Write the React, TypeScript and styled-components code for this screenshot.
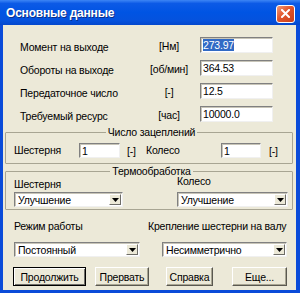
import styled, { createGlobalStyle } from "styled-components";

const GlobalStyle = createGlobalStyle`
  html, body { margin: 0; padding: 0; background: #fff; }
  body {
    font-family: "Liberation Sans", Arial, sans-serif;
    font-size: 10.5px;
    letter-spacing: -0.2px;
    color: #000;
  }
  * { box-sizing: border-box; }
`;

const Window = styled.div`
  width: 300px;
  height: 293px;
  display: flex;
  flex-direction: column;
  background: #0a4bd9;
`;

const TitleBar = styled.div`
  height: 25px;
  flex: none;
  display: flex;
  align-items: center;
  justify-content: space-between;
  padding: 0 5px 0 6px;
  background: linear-gradient(#3d86f5 0%, #0c5ae6 14%, #0054e3 50%, #0552dd 82%, #0447cc 100%);
`;

const Title = styled.span`
  color: #fff;
  font-weight: bold;
  font-size: 12px;
  letter-spacing: -0.2px;
  text-shadow: 1px 1px 0 #0a2f8a;
`;

const CloseButton = styled.div`
  width: 19px;
  height: 18px;
  margin-top: 2px;
  border: 1px solid #fff;
  border-radius: 3px;
  background: linear-gradient(135deg, #f09a7a 0%, #e2552b 45%, #c8401c 100%);
  display: flex;
  align-items: center;
  justify-content: center;
`;

const Body = styled.div`
  flex: 1;
  margin: 0 4px 3px 3px;
  background: #ece9d8;
  display: flex;
  flex-direction: column;
  padding: 12px 3px 0 2px;
`;

const Fields = styled.div`
  display: grid;
  grid-template-columns: 128px 52px 73px;
  grid-auto-rows: 16px;
  row-gap: 7px;
  padding-left: 15px;
  align-items: center;
`;

const Label = styled.span<{ $lift?: number }>`
  white-space: nowrap;
  line-height: 13px;
  position: relative;
  top: ${(p) => -(p.$lift ?? 0)}px;
`;

const Unit = styled.span`
  white-space: nowrap;
  line-height: 13px;
  text-align: center;
  padding-right: 10px;
  position: relative;
  top: 1px;
`;

const SmallUnit = styled.span<{ $pad: number }>`
  white-space: nowrap;
  padding-left: ${(p) => p.$pad}px;
`;

const TextBox = styled.div<{ $h: number }>`
  height: ${(p) => p.$h}px;
  background: #fff;
  border: 1px solid;
  border-color: #808080 #f0f0f0 #f0f0f0 #808080;
  box-shadow: inset 1px 1px 0 #c8c5b8;
  padding-left: 2px;
  display: flex;
  align-items: center;
  white-space: nowrap;
  overflow: hidden;
`;

const Selected = styled.span`
  background: #316ac5;
  color: #fff;
  line-height: 12px;
`;

const Group = styled.fieldset<{ $top: number; $pt: number; $pb: number }>`
  margin: ${(p) => p.$top}px 0 0 0;
  min-width: 0;
  border: 1px solid #a8a593;
  border-radius: 1px;
  padding: ${(p) => p.$pt}px 3px ${(p) => p.$pb}px 8px;
`;

const Legend = styled.legend`
  margin: 0 auto;
  padding: 0 2px;
  line-height: 13px;
`;

const MeshRow = styled.div`
  display: grid;
  grid-template-columns: 65px 41px 26px 75px 40px auto;
  align-items: center;
`;

const HeatGrid = styled.div`
  display: grid;
  grid-template-columns: 109px 111px;
  column-gap: 54px;
`;

const Column = styled.div<{ $gap?: number }>`
  display: flex;
  flex-direction: column;
  align-items: flex-start;
  gap: ${(p) => p.$gap ?? 0}px;
`;

const Combo = styled.div<{ $w: number; $ml?: number }>`
  width: ${(p) => p.$w}px;
  margin-left: ${(p) => p.$ml ?? 0}px;
  height: 15px;
  background: #fff;
  border: 1px solid;
  border-color: #808080 #f0f0f0 #f0f0f0 #808080;
  box-shadow: inset 1px 1px 0 #c8c5b8;
  display: flex;
  align-items: stretch;
  padding: 1px 1px 1px 3px;
`;

const ComboValue = styled.span`
  flex: 1;
  line-height: 12px;
  white-space: nowrap;
`;

const DropButton = styled.span`
  width: 12px;
  background: #ece9d8;
  border: 1px solid;
  border-color: #fff #6e6d68 #6e6d68 #fff;
  display: flex;
  align-items: center;
  justify-content: center;
`;

const Selectors = styled.div`
  display: grid;
  grid-template-columns: 134px 1fr;
  margin-top: 10px;
  padding-left: 9px;
`;

const SelectorLabel = styled.span`
  line-height: 13px;
  white-space: nowrap;
  margin-bottom: 9px;
`;

const Buttons = styled.div`
  display: grid;
  grid-template-columns: 82px 71px 66px 55px;
  margin-top: 10px;
  padding-left: 8px;
`;

const Button = styled.div<{ $w: number; $default?: boolean }>`
  width: ${(p) => p.$w}px;
  height: 19px;
  background: #ece9d8;
  border: 1px solid;
  border-color: ${(p) => (p.$default ? "#000" : "#fff #5a5850 #5a5850 #fff")};
  box-shadow: ${(p) =>
    p.$default
      ? "inset 1px 1px 0 #fff, inset -1px -1px 0 #6e6d68"
      : "inset -1px -1px 0 #a8a593"};
  display: flex;
  align-items: center;
  justify-content: center;
  white-space: nowrap;
`;

const Arrow = () => (
  <svg width="7" height="4" viewBox="0 0 7 4">
    <path d="M0 0h7L3.5 4z" fill="#000" />
  </svg>
);

const ComboBox = ({ w, ml, value }: { w: number; ml?: number; value: string }) => (
  <Combo $w={w} $ml={ml}>
    <ComboValue>{value}</ComboValue>
    <DropButton>
      <Arrow />
    </DropButton>
  </Combo>
);

const fields = [
  { label: "Момент на выходе", unit: "[Нм]", value: "273.97", selected: true },
  { label: "Обороты на выходе", unit: "[об/мин]", value: "364.53" },
  { label: "Передаточное число", unit: "[-]", value: "12.5" },
  { label: "Требуемый ресурс", unit: "[час]", value: "10000.0" },
];

export default function App() {
  return (
    <>
      <GlobalStyle />
      <Window>
        <TitleBar>
          <Title>Основные данные</Title>
          <CloseButton>
            <svg width="9" height="9" viewBox="0 0 9 9">
              <path d="M1 1l7 7M8 1L1 8" stroke="#fff" strokeWidth="2" strokeLinecap="square" />
            </svg>
          </CloseButton>
        </TitleBar>
        <Body>
          <Fields>
            {fields.map((f) => [
              <Label key={f.label + "l"} $lift={-2}>{f.label}</Label>,
              <Unit key={f.label + "u"}>{f.unit}</Unit>,
              <TextBox key={f.label + "v"} $h={16}>
                {f.selected ? <Selected>{f.value}</Selected> : f.value}
              </TextBox>,
            ])}
          </Fields>

          <Group $top={4} $pt={4} $pb={5}>
            <Legend>Число зацеплений</Legend>
            <MeshRow>
              <Label>Шестерня</Label>
              <TextBox $h={15}>1</TextBox>
              <SmallUnit $pad={7}>[-]</SmallUnit>
              <Label>Колесо</Label>
              <TextBox $h={15}>1</TextBox>
              <SmallUnit $pad={8}>[-]</SmallUnit>
            </MeshRow>
          </Group>

          <Group $top={1} $pt={0} $pb={2}>
            <Legend>Термообработка</Legend>
            <HeatGrid>
              <Column $gap={1}>
                <Label>Шестерня</Label>
                <ComboBox w={109} value="Улучшение" />
              </Column>
              <Column $gap={1}>
                <Label $lift={3}>Колесо</Label>
                <ComboBox w={111} value="Улучшение" />
              </Column>
            </HeatGrid>
          </Group>

          <Selectors>
            <Column>
              <SelectorLabel>Режим работы</SelectorLabel>
              <ComboBox w={126} value="Постоянный" />
            </Column>
            <Column>
              <SelectorLabel>Крепление шестерни на валу</SelectorLabel>
              <ComboBox w={125} ml={14} value="Несимметрично" />
            </Column>
          </Selectors>

          <Buttons>
            <Button $w={73} $default>Продолжить</Button>
            <Button $w={54}>Прервать</Button>
            <Button $w={47}>Справка</Button>
            <Button $w={55}>Еще...</Button>
          </Buttons>
        </Body>
      </Window>
    </>
  );
}
